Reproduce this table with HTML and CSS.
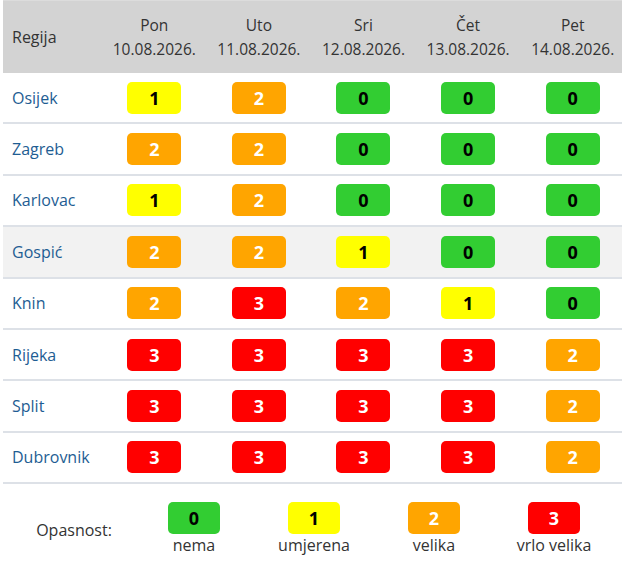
FILE: index.html
```html
<!DOCTYPE html>
<html lang="hr">
<head>
<meta charset="utf-8">
<title>Opasnost od požara</title>
<link rel="stylesheet" href="styles.css">
</head>
<body>
<div class="wrap">
  <table class="fc">
    <colgroup>
      <col class="c-reg">
      <col><col><col><col><col>
    </colgroup>
    <thead>
      <tr>
        <th class="th-reg">Regija</th>
        <th>Pon<br>10.08.2026.</th>
        <th>Uto<br>11.08.2026.</th>
        <th>Sri<br>12.08.2026.</th>
        <th>Čet<br>13.08.2026.</th>
        <th>Pet<br>14.08.2026.</th>
      </tr>
    </thead>
    <tbody>
      <tr>
        <td class="reg">Osijek</td>
        <td><span class="b l1">1</span></td>
        <td><span class="b l2">2</span></td>
        <td><span class="b l0">0</span></td>
        <td><span class="b l0">0</span></td>
        <td><span class="b l0">0</span></td>
      </tr>
      <tr>
        <td class="reg">Zagreb</td>
        <td><span class="b l2">2</span></td>
        <td><span class="b l2">2</span></td>
        <td><span class="b l0">0</span></td>
        <td><span class="b l0">0</span></td>
        <td><span class="b l0">0</span></td>
      </tr>
      <tr>
        <td class="reg">Karlovac</td>
        <td><span class="b l1">1</span></td>
        <td><span class="b l2">2</span></td>
        <td><span class="b l0">0</span></td>
        <td><span class="b l0">0</span></td>
        <td><span class="b l0">0</span></td>
      </tr>
      <tr class="hover">
        <td class="reg">Gospić</td>
        <td><span class="b l2">2</span></td>
        <td><span class="b l2">2</span></td>
        <td><span class="b l1">1</span></td>
        <td><span class="b l0">0</span></td>
        <td><span class="b l0">0</span></td>
      </tr>
      <tr>
        <td class="reg">Knin</td>
        <td><span class="b l2">2</span></td>
        <td><span class="b l3">3</span></td>
        <td><span class="b l2">2</span></td>
        <td><span class="b l1">1</span></td>
        <td><span class="b l0">0</span></td>
      </tr>
      <tr>
        <td class="reg">Rijeka</td>
        <td><span class="b l3">3</span></td>
        <td><span class="b l3">3</span></td>
        <td><span class="b l3">3</span></td>
        <td><span class="b l3">3</span></td>
        <td><span class="b l2">2</span></td>
      </tr>
      <tr>
        <td class="reg">Split</td>
        <td><span class="b l3">3</span></td>
        <td><span class="b l3">3</span></td>
        <td><span class="b l3">3</span></td>
        <td><span class="b l3">3</span></td>
        <td><span class="b l2">2</span></td>
      </tr>
      <tr>
        <td class="reg">Dubrovnik</td>
        <td><span class="b l3">3</span></td>
        <td><span class="b l3">3</span></td>
        <td><span class="b l3">3</span></td>
        <td><span class="b l3">3</span></td>
        <td><span class="b l2">2</span></td>
      </tr>
    </tbody>
  </table>

  <table class="legend">
    <tr>
      <td class="lg-title">Opasnost:</td>
      <td><span class="b lb l0">0</span><div class="lg-label">nema</div></td>
      <td><span class="b lb l1">1</span><div class="lg-label">umjerena</div></td>
      <td><span class="b lb l2">2</span><div class="lg-label">velika</div></td>
      <td><span class="b lb l3">3</span><div class="lg-label">vrlo velika</div></td>
    </tr>
  </table>
</div>
</body>
</html>
```

FILE: styles.css
```css
html, body {
  margin: 0;
  padding: 0;
  overflow: hidden;
  background: #ffffff;
}

body {
  font-family: "Open Sans", "DejaVu Sans", sans-serif;
  color: #333333;
}

.wrap {
  width: 622px;
  margin-left: 3px;
}

.fc {
  width: 622px;
  border-collapse: collapse;
  table-layout: fixed;
}

.c-reg {
  width: 99px;
}

.fc thead th {
  background: #d3d3d3;
  height: 72px;
  padding: 0;
  font-weight: normal;
  font-size: 15.5px;
  line-height: 24px;
  text-align: center;
  vertical-align: middle;
  color: #333333;
  border-top: 1px solid #dcdcdc;
}

.fc thead th.th-reg {
  text-align: left;
  padding-left: 9px;
  font-size: 16px;
}

.fc tbody td {
  height: 49.4px;
  padding: 0;
  text-align: center;
  vertical-align: middle;
  border-bottom: 2px solid #dde1e7;
}

.fc tbody tr.hover td {
  background: #f2f2f2;
}

.fc tbody td.reg {
  text-align: left;
  padding-left: 9px;
  font-size: 16px;
  color: #1e5d93;
}

.b {
  display: inline-block;
  width: 54px;
  height: 32px;
  line-height: 32px;
  border-radius: 5px;
  font-weight: bold;
  font-size: 18px;
  text-align: center;
  vertical-align: middle;
}

.l0 { background: #32cd32; color: #000000; }
.l1 { background: #ffff00; color: #000000; }
.l2 { background: #ffa500; color: #ffffff; }
.l3 { background: #ff0000; color: #ffffff; }

.legend {
  width: 600px;
  margin: 18px auto 0;
  border-collapse: collapse;
  table-layout: fixed;
}

.legend td {
  padding: 0;
  text-align: center;
  vertical-align: middle;
  font-size: 16px;
  color: #333333;
}

.lb {
  width: 52px;
}

.lg-label {
  line-height: 23px;
}
```
